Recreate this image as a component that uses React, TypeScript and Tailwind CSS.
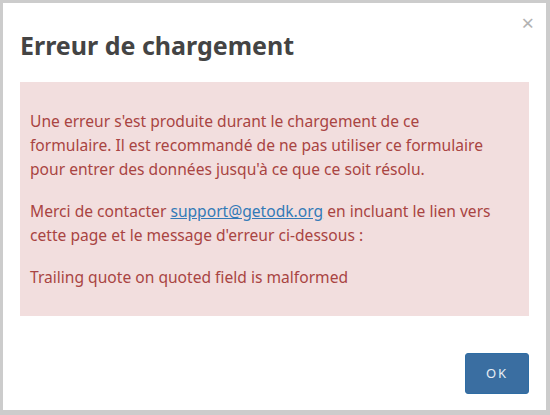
export default function App() {
  return (
    <div
      className="h-[415px] w-[550px] bg-[#cccccc] pt-[3px] pl-[3px]"
      style={{ fontFamily: '"Noto Sans", "Open Sans", sans-serif' }}
    >
      <div className="relative flex h-[407px] w-[543px] flex-col bg-white">
        <button className="absolute right-[12px] top-[8px] text-[22px] leading-none text-[#b3b3b3]">
          ×
        </button>
        <h1 className="mt-[24px] ml-[17px] text-[25px] font-bold leading-[36px] text-[#444444]">
          Erreur de chargement
        </h1>
        <div className="mt-[19px] ml-[17px] h-[234px] w-[509px] bg-[#f2dede] pt-[27px] pl-[10px] text-[15.6px] leading-[24px] text-[#a94442]">
          <div className="w-[495px] whitespace-nowrap">
            <p className="mb-[18px]">
              Une erreur s'est produite durant le chargement de ce
              <br />
              formulaire. Il est recommandé de ne pas utiliser ce formulaire
              <br />
              pour entrer des données jusqu'à ce que ce soit résolu.
            </p>
            <p className="mb-[18px]">
              Merci de contacter{" "}
              <a href="#" className="text-[#337ab7] underline">
                support@getodk.org
              </a>{" "}
              en incluant le lien vers
              <br />
              cette page et le message d'erreur ci-dessous :
            </p>
            <p>Trailing quote on quoted field is malformed</p>
          </div>
        </div>
        <div className="mt-[37px] flex justify-end pr-[17px]">
          <button className="h-[41px] w-[64px] rounded-[3px] border border-[#2e6da4] bg-[#3a6ea1] text-[13px] tracking-[2px] text-[#e8eef5]">
            OK
          </button>
        </div>
      </div>
    </div>
  );
}
